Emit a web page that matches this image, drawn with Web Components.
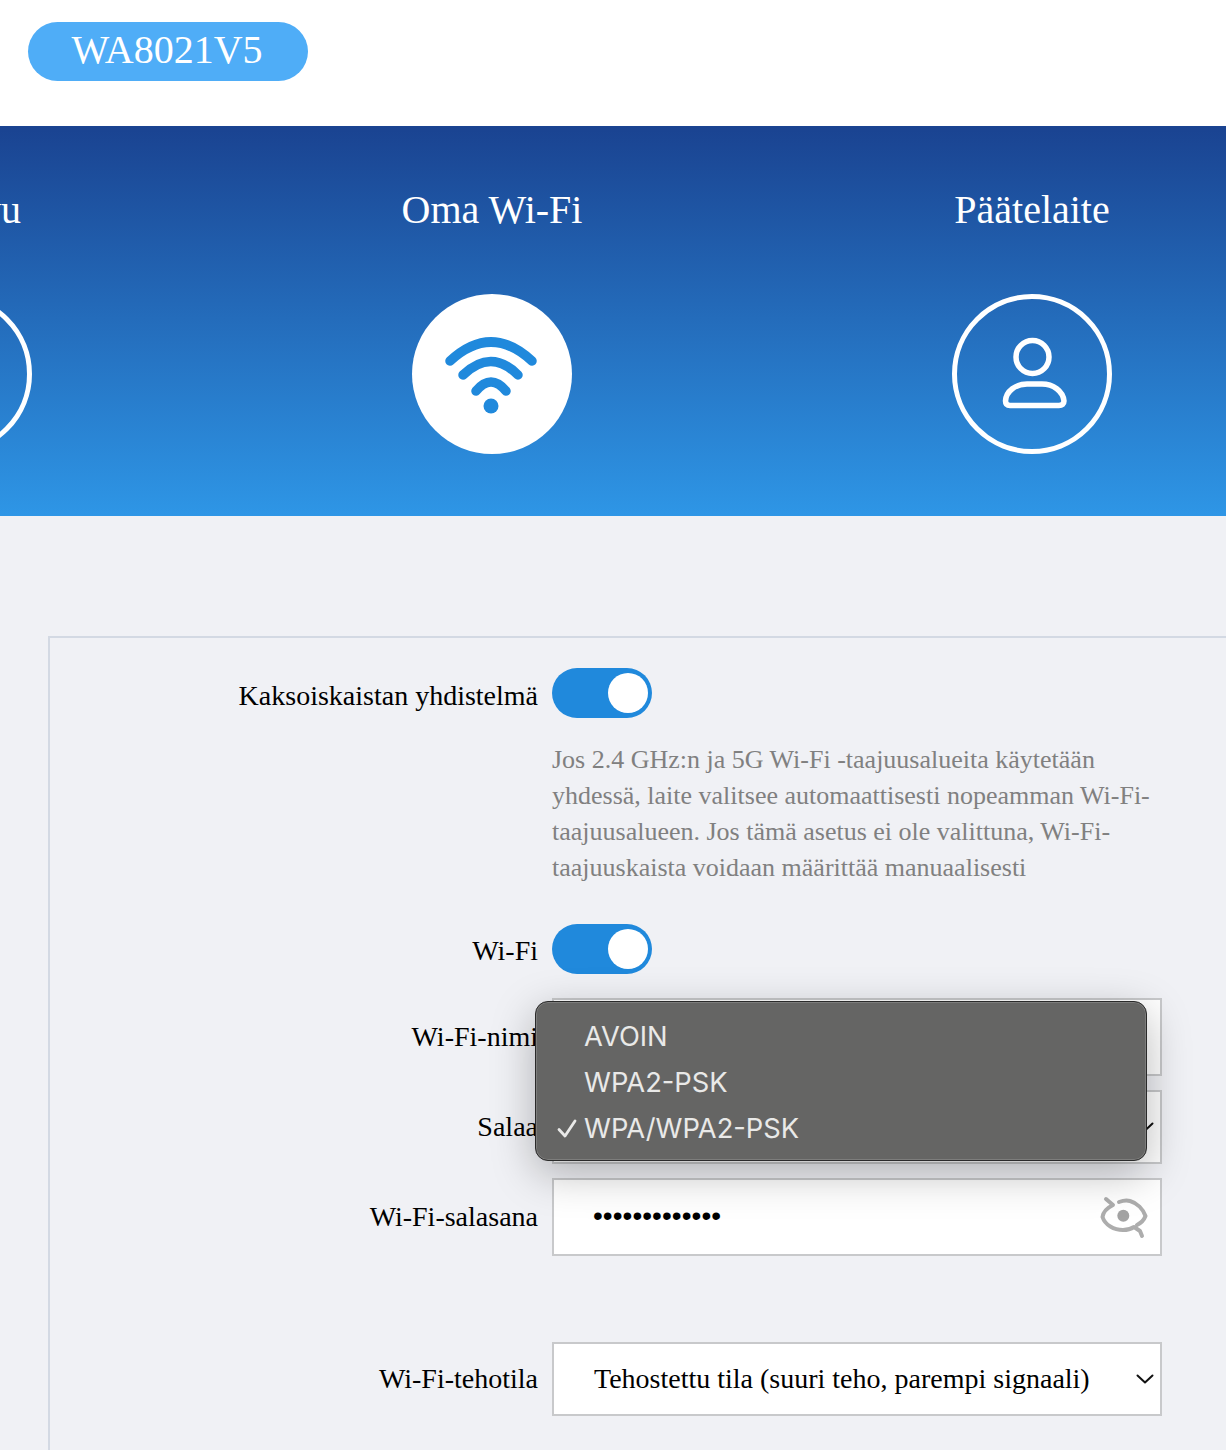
<!DOCTYPE html>
<html lang="fi">
<head>
<meta charset="utf-8">
<title>WA8021V5</title>
<style>
  html, body { margin: 0; padding: 0; }
  body {
    height: 1450px;
    overflow: hidden;
    background: #f0f1f5;
    font-family: "Liberation Serif", "Times New Roman", serif;
    color: #000;
  }
  .tall { margin-top: 86px; }
  .near { margin-top: 14px; }
  .wide { margin-top: 24px; }
  .gapped { margin-top: 38px; }
  .first { --label-shift: 6px; }
  .switch { --label-shift: 4px; }
  svg { display: block; }
</style>
</head>
<body>

<top-bar model="WA8021V5"></top-bar>

<step-banner>
  <step-item label="Kotisivu"></step-item>
  <step-item label="Oma Wi-Fi" active>
    <svg width="160" height="160" viewBox="0 0 160 160" fill="none" stroke="#2089dc" stroke-width="9.500" stroke-linecap="round">
      <path d="M38 67Q79 29 120 67"/>
      <path d="M51 81Q79 54 106 81"/>
      <path d="M64 97Q79 79 94 97"/>
      <circle cx="79" cy="112" r="7.500" fill="#2089dc" stroke="none"/>
    </svg>
  </step-item>
  <step-item label="Päätelaite">
    <svg width="150" height="150" viewBox="5 5 150 150" fill="none" stroke="#fff" stroke-width="5.500" stroke-linejoin="round">
      <circle cx="80.500" cy="63" r="16.500"/>
      <path d="M58 111.500H107C110 111.500 112 110 112 107C111 97 101 90 90 90H75C64 90 54 97 53.500 107C53.500 110 55 111.500 58 111.500Z"/>
    </svg>
  </step-item>
</step-banner>

<settings-panel>
  <form-row class="first" label="Kaksoiskaistan yhdistelmä"><toggle-switch></toggle-switch></form-row>
  <form-row class="wide"><hint-text>Jos 2.4 GHz:n ja 5G Wi-Fi -taajuusalueita käytetään yhdessä, laite valitsee automaattisesti nopeamman Wi-Fi-taajuusalueen. Jos tämä asetus ei ole valittuna, Wi-Fi-taajuuskaista voidaan määrittää manuaalisesti</hint-text></form-row>
  <form-row class="gapped switch" label="Wi-Fi"><toggle-switch></toggle-switch></form-row>
  <form-row class="wide" label="Wi-Fi-nimi"><field-box tall></field-box></form-row>
  <form-row class="near" label="Salaa"><field-box chevron></field-box></form-row>
  <form-row class="near" label="Wi-Fi-salasana">
    <field-box tall>
      <span style="font:28px 'Liberation Sans',sans-serif;letter-spacing:.05px;position:relative;top:-1px;left:-1px">•••••••••••••</span>
      <svg slot="end" width="50" height="44" viewBox="0 0 50 44" fill="none" stroke="#adadad" stroke-width="4" stroke-linecap="round" stroke-linejoin="round">
        <path d="M7 4L14 10C8 13 4 18 3.500 22C6 30 15 35 24 35C28 35 32 34 35 32L41 36L43 41"/>
        <path d="M20 7C24 5.500 28 5 31 6C38 8 44 14 46.500 21C45 25 42 28 38 30"/>
        <circle cx="24.300" cy="20.700" r="6" fill="#a3a3a3" stroke="none"/>
      </svg>
    </field-box>
  </form-row>
  <form-row class="tall" label="Wi-Fi-tehotila"><field-box chevron>Tehostettu tila (suuri teho, parempi signaali)</field-box></form-row>
</settings-panel>

<popup-menu>
  <menu-option>AVOIN</menu-option>
  <menu-option>WPA2-PSK</menu-option>
  <menu-option checked>WPA/WPA2-PSK</menu-option>
</popup-menu>

<script>
class TopBar extends HTMLElement {
  connectedCallback() {
    this.attachShadow({ mode: "open" });
    this.shadowRoot.innerHTML = `
      <style>
        :host { display: block; height: 126px; background: #fff; padding: 22px 0 0 28px; box-sizing: border-box; }
        .pill {
          width: 278px;
          padding-right: 2px;
          height: 59px;
          border-radius: 30px;
          background: #4fadf7;
          color: #fff;
          font-size: 40px;
          line-height: 55px;
          text-align: center;
        }
      </style>
      <div class="pill">${this.getAttribute("model")}</div>`;
  }
}

class StepBanner extends HTMLElement {
  connectedCallback() {
    this.attachShadow({ mode: "open" });
    this.shadowRoot.innerHTML = `
      <style>
        :host {
          display: flex;
          height: 390px;
          overflow: hidden;
          background: linear-gradient(#1a4391, #2e96e6);
        }
        .row { display: flex; flex: none; margin-left: -318px; }
      </style>
      <div class="row"><slot></slot></div>`;
  }
}

class StepItem extends HTMLElement {
  connectedCallback() {
    this.attachShadow({ mode: "open" });
    this.shadowRoot.innerHTML = `
      <style>
        :host { display: flex; flex-direction: column; align-items: center; width: 540px; flex: none; }
        .label { color: #fff; font-size: 40px; line-height: 46px; margin-top: 61px; white-space: nowrap; }
        .ring {
          width: 160px;
          height: 160px;
          margin-top: 61px;
          box-sizing: border-box;
          border: 5px solid #fff;
          border-radius: 50%;
          display: flex;
          align-items: center;
          justify-content: center;
        }
        :host([active]) .ring { background: #fff; border: 0; }
      </style>
      <div class="label">${this.getAttribute("label")}</div>
      <div class="ring"><slot></slot></div>`;
  }
}

class SettingsPanel extends HTMLElement {
  connectedCallback() {
    this.attachShadow({ mode: "open" });
    this.shadowRoot.innerHTML = `
      <style>
        :host {
          display: block;
          box-sizing: border-box;
          height: 814px;
          margin: 120px 0 0 48px;
          padding: 30px 0 0;
          border: 2px solid #d3d9e3;
          border-right: 0;
          border-bottom: 0;
        }
      </style>
      <slot></slot>`;
  }
}

class FormRow extends HTMLElement {
  connectedCallback() {
    this.attachShadow({ mode: "open" });
    this.shadowRoot.innerHTML = `
      <style>
        :host {
          display: grid;
          grid-template-columns: 488px 610px;
          column-gap: 14px;
          align-items: center;
          font-size: 28px;
        }
        .label { text-align: right; white-space: nowrap; line-height: 32px; padding-top: var(--label-shift, 0); }
      </style>
      <div class="label">${this.getAttribute("label") || ""}</div>
      <div><slot></slot></div>`;
  }
}

class ToggleSwitch extends HTMLElement {
  connectedCallback() {
    this.attachShadow({ mode: "open" });
    this.shadowRoot.innerHTML = `
      <style>
        :host {
          display: flex;
          justify-content: flex-end;
          align-items: center;
          width: 100px;
          height: 50px;
          padding-right: 4px;
          box-sizing: border-box;
          border-radius: 25px;
          background: #2089dc;
        }
        .knob { width: 40px; height: 40px; border-radius: 50%; background: #fff; }
      </style>
      <div class="knob"></div>`;
  }
}

class HintText extends HTMLElement {
  connectedCallback() {
    this.attachShadow({ mode: "open" });
    this.shadowRoot.innerHTML = `
      <style>
        :host { display: block; color: #808080; font-size: 26px; line-height: 36px; }
      </style>
      <slot></slot>`;
  }
}

class FieldBox extends HTMLElement {
  connectedCallback() {
    const chevron = this.hasAttribute("chevron") ? `
      <svg width="18" height="10" viewBox="0 0 18 10" fill="none" stroke="#111" stroke-width="2" stroke-linecap="round" stroke-linejoin="round">
        <path d="M1.500 1.500L9 8.500L16.500 1.500"/>
      </svg>` : "";
    this.attachShadow({ mode: "open" });
    this.shadowRoot.innerHTML = `
      <style>
        :host {
          display: flex;
          align-items: center;
          justify-content: space-between;
          box-sizing: border-box;
          height: 74px;
          padding: 0 6px 0 40px;
          border: 2px solid #c8c9cb;
          background: #fff;
          white-space: nowrap;
        }
        :host([tall]) { height: 78px; padding-right: 11px; }
      </style>
      <div><slot></slot></div>
      <slot name="end">${chevron}</slot>`;
  }
}

class PopupMenu extends HTMLElement {
  connectedCallback() {
    this.attachShadow({ mode: "open" });
    this.shadowRoot.innerHTML = `
      <style>
        :host {
          display: block;
          position: absolute;
          left: 535px;
          top: 1001px;
          width: 612px;
          height: 160px;
          box-sizing: border-box;
          padding: 11px 0;
          border-radius: 13px;
          background: #656564;
          border: 1px solid #2a2a2a;
          box-shadow: inset 0 0 0 1px #7d7d7c, 0 12px 44px rgba(0, 0, 0, .28);
          font-family: Inter, "Liberation Sans", sans-serif;
          font-size: 27.300px;
          color: #e9e9e8;
        }
      </style>
      <slot></slot>`;
  }
}

class MenuOption extends HTMLElement {
  connectedCallback() {
    const check = this.hasAttribute("checked") ? `
      <svg width="20" height="20" viewBox="0 0 20 20" fill="none" stroke="#e9e9e8" stroke-width="2.800" stroke-linecap="round" stroke-linejoin="round">
        <path d="M2 10.500L8 17L18 2"/>
      </svg>` : "";
    this.attachShadow({ mode: "open" });
    this.shadowRoot.innerHTML = `
      <style>
        :host { display: flex; align-items: center; height: 46px; padding-left: 48px; position: relative; white-space: nowrap; }
        svg { position: absolute; left: 21px; top: 14px; }
      </style>
      ${check}<slot></slot>`;
  }
}

customElements.define("top-bar", TopBar);
customElements.define("step-banner", StepBanner);
customElements.define("step-item", StepItem);
customElements.define("settings-panel", SettingsPanel);
customElements.define("form-row", FormRow);
customElements.define("toggle-switch", ToggleSwitch);
customElements.define("hint-text", HintText);
customElements.define("field-box", FieldBox);
customElements.define("popup-menu", PopupMenu);
customElements.define("menu-option", MenuOption);
</script>
</body>
</html>
